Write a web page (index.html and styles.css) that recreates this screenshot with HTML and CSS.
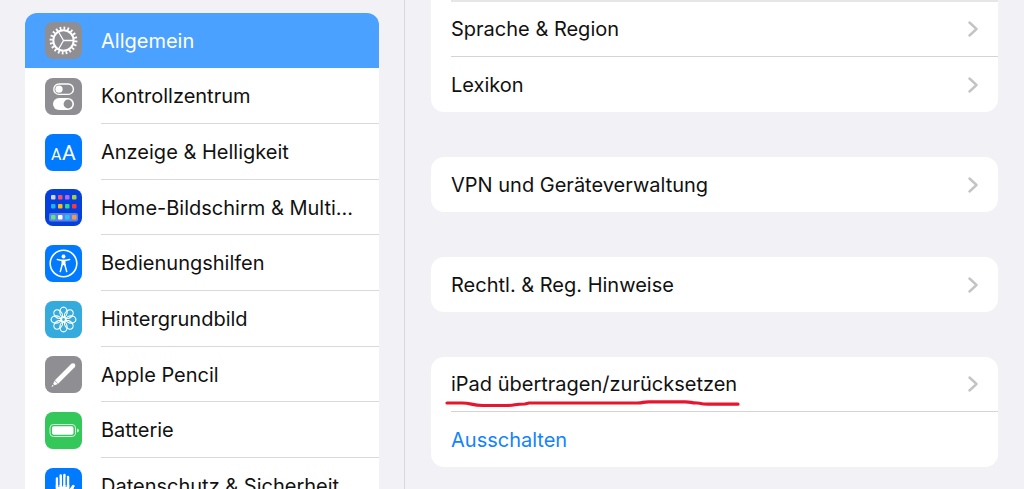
FILE: index.html
```html
<!DOCTYPE html>
<html lang="de">

<head>
  <meta charset="UTF-8">
  <meta name="viewport" content="width=device-width, initial-scale=1.0">
  <title>Einstellungen</title>
  <link rel="stylesheet" href="styles.css">
</head>

<body>
  <div class="container">
    <nav class="sidebar">
      <ul class="menu">
        <li><a class="menu-link selected" href="#">
          <svg class="icon gray" viewBox="0 0 37 37">
            <g fill="none" stroke="#fff">
              <circle cx="18.5" cy="18.5" r="12.4" stroke-width="3" pathLength="40" stroke-dasharray="0.9 1.1" />
              <circle cx="18.5" cy="18.5" r="10.2" stroke-width="2" />
              <path d="M18.5 18.5H28.5M18.5 18.5L13.5 9.8M18.5 18.5L13.5 27.2" stroke-width="1.3" />
            </g>
          </svg>
          <span class="text">Allgemein</span></a></li>
        <li><a class="menu-link" href="#">
          <svg class="icon gray" viewBox="0 0 37 37">
            <rect x="8.8" y="6" width="19.6" height="10.4" rx="5.2" fill="none" stroke="#fff" stroke-width="1.4" />
            <circle cx="14" cy="11.2" r="3.6" fill="#fff" />
            <rect x="8" y="20" width="21" height="12" rx="6" fill="#fff" />
            <circle cx="23" cy="26" r="4.4" fill="#8e8e93" />
          </svg>
          <span class="text">Kontrollzentrum</span></a></li>
        <li><a class="menu-link" href="#">
          <svg class="icon blue" viewBox="0 0 37 37">
            <text class="glyph" x="6" y="26" font-size="16">A</text>
            <text class="glyph" x="17" y="26" font-size="21">A</text>
          </svg>
          <span class="text">Anzeige &amp; Helligkeit</span></a></li>
        <li><a class="menu-link" href="#">
          <svg class="icon navy" viewBox="0 0 37 37">
            <rect x="4" y="24" width="29" height="8.5" rx="2" fill="#5b83e6" />
            <rect x="6" y="6" width="4.5" height="4.5" rx="1" fill="#d5d3d0" />
            <rect x="13" y="6" width="4.5" height="4.5" rx="1" fill="#fb4f67" />
            <rect x="20" y="6" width="4.5" height="4.5" rx="1" fill="#b867f2" />
            <rect x="27" y="6" width="4.5" height="4.5" rx="1" fill="#a9cf3d" />
            <rect x="6" y="15" width="4.5" height="4.5" rx="1" fill="#19b5f1" />
            <rect x="13" y="15" width="4.5" height="4.5" rx="1" fill="#fdbb10" />
            <rect x="20" y="15" width="4.5" height="4.5" rx="1" fill="#2fd68c" />
            <rect x="27" y="15" width="4.5" height="4.5" rx="1" fill="#fa3a3a" />
            <rect x="6" y="26" width="4.5" height="4.5" rx="1" fill="#5ee878" />
            <rect x="13" y="26" width="4.5" height="4.5" rx="1" fill="#fff" />
            <rect x="20" y="26" width="4.5" height="4.5" rx="1" fill="#1ec8f5" />
            <rect x="27" y="26" width="4.5" height="4.5" rx="1" fill="#f79a47" />
          </svg>
          <span class="text">Home-Bildschirm &amp; Multi...</span></a></li>
        <li><a class="menu-link" href="#">
          <svg class="icon blue" viewBox="0 0 37 37">
            <circle cx="18.5" cy="18.5" r="13.3" fill="none" stroke="#fff" stroke-width="1.6" />
            <circle cx="18.5" cy="11.6" r="2" fill="#fff" />
            <path d="M12.3 14.5L17 15.4H20L24.7 14.5M17.2 19.5L15.3 26.6M19.8 19.5L21.7 26.6" fill="none" stroke="#fff" stroke-width="1.5" stroke-linecap="round" />
            <path d="M16.5 14.8H20.5V21L18.5 20L16.5 21Z" fill="#fff" />
          </svg>
          <span class="text">Bedienungshilfen</span></a></li>
        <li><a class="menu-link" href="#">
          <svg class="icon cyan" viewBox="0 0 37 37">
            <g fill="none" stroke="#fff" stroke-width="1.2" transform="translate(18.5 18.5)">
              <circle r="2" />
              <ellipse cy="-7.5" rx="3.6" ry="4.9" />
              <ellipse cy="-7.5" rx="3.6" ry="4.9" transform="rotate(45)" />
              <ellipse cy="-7.5" rx="3.6" ry="4.9" transform="rotate(90)" />
              <ellipse cy="-7.5" rx="3.6" ry="4.9" transform="rotate(135)" />
              <ellipse cy="-7.5" rx="3.6" ry="4.9" transform="rotate(180)" />
              <ellipse cy="-7.5" rx="3.6" ry="4.9" transform="rotate(225)" />
              <ellipse cy="-7.5" rx="3.6" ry="4.9" transform="rotate(270)" />
              <ellipse cy="-7.5" rx="3.6" ry="4.9" transform="rotate(315)" />
            </g>
          </svg>
          <span class="text">Hintergrundbild</span></a></li>
        <li><a class="menu-link" href="#">
          <svg class="icon gray" viewBox="0 0 37 37">
            <path d="M11.5 26L28 9.5" stroke="#fff" stroke-width="4.6" />
            <circle cx="28" cy="9.5" r="2.3" fill="#fff" />
            <path d="M9.5 24.8L12.8 28L9.6 29.3L8.2 27.9Z" fill="#fff" />
            <path d="M7.6 28.8L8.8 30L6.4 31Z" fill="#fff" />
          </svg>
          <span class="text">Apple Pencil</span></a></li>
        <li><a class="menu-link" href="#">
          <svg class="icon green" viewBox="0 0 37 37">
            <rect x="5" y="12.5" width="25.5" height="12" rx="3.4" fill="none" stroke="#d4f4db" stroke-width="1" />
            <rect x="7" y="14.3" width="21.5" height="8.4" rx="1.8" fill="#fff" />
            <path d="M32 16.4Q34 16.8 34 18.5T32 20.6Z" fill="#d4f4db" />
          </svg>
          <span class="text">Batterie</span></a></li>
        <li><a class="menu-link" href="#">
          <svg class="icon blue" viewBox="0 0 37 37">
            <g fill="none" stroke="#fff" stroke-linecap="round" stroke-width="2.5">
              <path d="M12 20V10.5M15.7 20V7.5M19.4 20V7M23 20V9M24 24L28.3 18" />
            </g>
            <path d="M10.8 17H24.3V22L29.5 17.8Q26 29 22.5 31H15Q10.8 28 10.8 22Z" fill="#fff" />
            <path d="M13.8 10V19M17.5 8V18.5M21.2 9V19" stroke="#007aff" stroke-width="0.9" />
          </svg>
          <span class="text">Datenschutz &amp; Sicherheit</span></a></li>
      </ul>
    </nav>

    <main class="content">
      <ul class="group group-top">
        <li><a class="row" href="#">Sprache &amp; Region
          <svg class="arrow" viewBox="0 0 10 16"><path d="M1.5 1.5L8.5 8L1.5 14.5" /></svg></a></li>
        <li><a class="row" href="#">Lexikon
          <svg class="arrow" viewBox="0 0 10 16"><path d="M1.5 1.5L8.5 8L1.5 14.5" /></svg></a></li>
      </ul>
      <ul class="group">
        <li><a class="row" href="#">VPN und Geräteverwaltung
          <svg class="arrow" viewBox="0 0 10 16"><path d="M1.5 1.5L8.5 8L1.5 14.5" /></svg></a></li>
      </ul>
      <ul class="group">
        <li><a class="row" href="#">Rechtl. &amp; Reg. Hinweise
          <svg class="arrow" viewBox="0 0 10 16"><path d="M1.5 1.5L8.5 8L1.5 14.5" /></svg></a></li>
      </ul>
      <ul class="group">
        <li><a class="row" href="#"><span class="marked">iPad übertragen/zurücksetzen
            <svg class="marker" viewBox="0 0 296 8"><path d="M2 3H17C27 3 26 5.500 38 5.500H62C72 5.500 68 4 80 4L84 3H192C200 3 196 1.800 204 1.800H240C248 1.800 244 3 252 3C260 4 256 4.200 266 4.200H293" /></svg></span>
          <svg class="arrow" viewBox="0 0 10 16"><path d="M1.5 1.5L8.5 8L1.5 14.5" /></svg></a></li>
        <li><button class="row action" type="button">Ausschalten</button></li>
      </ul>
    </main>
  </div>
</body>

</html>
```
FILE: styles.css
```css
* {
  margin: 0;
  padding: 0;
  box-sizing: border-box;
}

body {
  background-color: #f2f1f6;
  color: #111;
  font-family: Inter, "Liberation Sans", sans-serif;
  font-size: 20px;
  line-height: 28px;
}

li {
  list-style: none;
}

a {
  color: inherit;
  text-decoration: none;
}

.container {
  display: grid;
  grid-template-columns: 405px 1fr;
  height: 100vh;
  overflow: hidden;
}

/* left column */
.sidebar {
  padding: 13px 25px 0;
  border-right: 1px solid #d9d9dd;
}

.menu {
  overflow: hidden;
  border-radius: 12px 12px 0 0;
  background-color: #fff;
}

.menu-link {
  display: flex;
  align-items: center;
  height: 56px;
  padding-left: 20px;
}

.menu li:nth-child(3n + 1) .menu-link {
  height: 55px;
}

.menu .selected {
  background-color: #4ba1ff;
  color: #fff;
}

.icon {
  flex: none;
  width: 37px;
  height: 37px;
  margin-right: 19px;
  border-radius: 8px;
}

.text {
  flex: 1;
  align-self: stretch;
  display: flex;
  align-items: center;
  padding-top: 1px;
  white-space: nowrap;
  border-bottom: 1px solid #d9d9dc;
}

.selected .text {
  border-bottom: 0;
}

.gray {
  background-color: #8e8e93;
}

.blue {
  background-color: #007aff;
}

.navy {
  background-color: #0640dc;
}

.cyan {
  background-color: #35aadc;
}

.green {
  background-color: #34c759;
}

.glyph {
  fill: #fff;
  font-family: Roboto, sans-serif;
}

/* right column */
.content {
  padding: 0 26px;
}

.group {
  margin-bottom: 45px;
  padding-left: 20px;
  border-radius: 13px;
  background-color: #fff;
}

.group-top {
  border-radius: 0 0 13px 13px;
}

.group-top::before {
  content: "";
  display: block;
  height: 2px;
  background-color: #e6e6e8;
}

.row {
  display: flex;
  align-items: center;
  justify-content: space-between;
  width: 100%;
  height: 55px;
  padding-right: 20px;
}

.group li:not(:last-child) .row {
  border-bottom: 1px solid #d4d4d7;
}

.group .action {
  border: 0;
  background: none;
  color: #1283ff;
  font: inherit;
  text-align: left;
  cursor: pointer;
}

.arrow {
  width: 10px;
  height: 16px;
  fill: none;
  stroke: #c4c4c7;
  stroke-width: 2.4;
  stroke-linecap: round;
  stroke-linejoin: round;
}

/* red pen line under the entry */
.marked {
  position: relative;
}

.marker {
  position: absolute;
  left: -6px;
  top: 30px;
  width: 296px;
  height: 8px;
  overflow: visible;
  fill: none;
  stroke: #e5162f;
  stroke-width: 3.2;
  stroke-linecap: round;
}
```
